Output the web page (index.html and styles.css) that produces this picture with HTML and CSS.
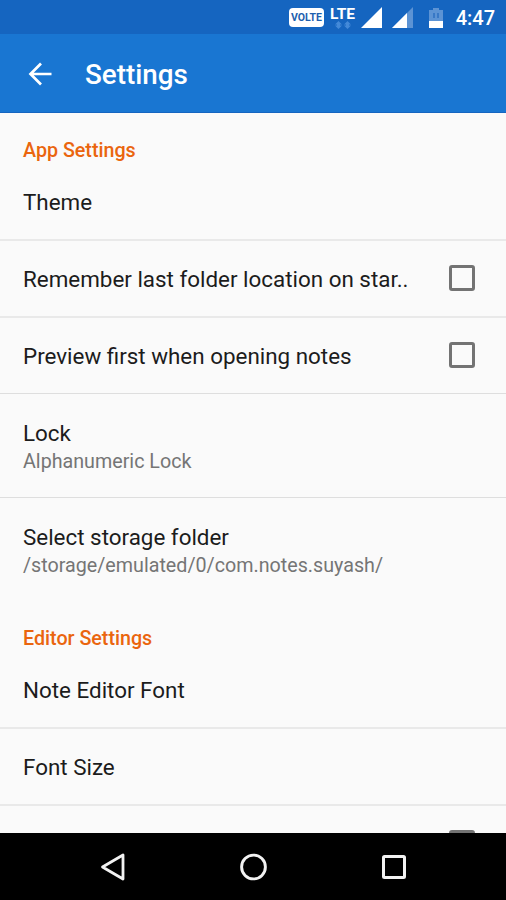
FILE: index.html
```html
<!DOCTYPE html>
<html lang="en">
<head>
  <meta charset="UTF-8">
  <meta name="viewport" content="width=device-width, initial-scale=1.0">
  <title>Settings</title>
  <link rel="stylesheet" href="styles.css">
</head>
<body>
  <div class="status-bar">
    <span class="volte">VOLTE</span>
    <div class="lte">
      <span>LTE</span>
      <svg width="18" height="8" viewBox="0 0 18 8"><path d="M4.5 0L8 3.5H6V4.5H8L4.5 8L1 4.5H3V3.5H1ZM13.500 0L17 3.500H15V4.500H17L13.500 8L10 4.500H12V3.500H10Z" fill="#4389d8"/></svg>
    </div>
    <svg class="signal" width="21" height="21" viewBox="0 0 21 21"><path d="M21 0V21H0Z" fill="#fff"/></svg>
    <svg class="signal-low" width="21" height="21" viewBox="0 0 21 21"><path d="M21 0V21H0Z" fill="#5c93d4"/><path d="M15 6V21H0Z" fill="#fff"/></svg>
    <svg class="battery" width="14" height="20" viewBox="0 0 14 20"><path d="M4 0H10V2H14V20H0V2H4Z" fill="#5c93d4"/><path d="M0 13H14V20H0Z" fill="#fff"/><path d="M4 5H6V10H4ZM8 5H10V10H8Z" fill="#3878c6"/></svg>
    <span class="clock">4:47</span>
  </div>

  <header class="toolbar">
    <svg class="back" width="24" height="24" viewBox="0 0 24 24"><path d="M23.500 12H2.500M13 1.500L2.500 12L13 22.500" fill="none" stroke="#fff" stroke-width="2.700"/></svg>
    <h1>Settings</h1>
  </header>

  <main class="settings">
    <h2>App Settings</h2>
    <div class="row"><span class="title">Theme</span></div>
    <div class="row">
      <span class="title">Remember last folder location on star..</span>
      <span class="checkbox"></span>
    </div>
    <div class="row thin short">
      <span class="title">Preview first when opening notes</span>
      <span class="checkbox"></span>
    </div>
    <div class="row double thin">
      <span class="title">Lock</span>
      <span class="summary">Alphanumeric Lock</span>
    </div>
    <div class="row double last">
      <span class="title">Select storage folder</span>
      <span class="summary">/storage/emulated/0/com.notes.suyash/</span>
    </div>
    <h2>Editor Settings</h2>
    <div class="row"><span class="title">Note Editor Font</span></div>
    <div class="row"><span class="title">Font Size</span></div>
    <div class="row"><span class="title"></span><span class="checkbox"></span></div>
  </main>

  <nav class="nav-bar">
    <svg width="28" height="30" viewBox="0 0 28 30"><path d="M24 3V27L3.500 15Z" fill="none" stroke="#f2f2f2" stroke-width="2.800" stroke-linejoin="round"/></svg>
    <svg width="28" height="30" viewBox="0 0 28 30"><circle cx="14.500" cy="15" r="11.900" fill="none" stroke="#f2f2f2" stroke-width="2.900"/></svg>
    <svg width="28" height="30" viewBox="0 0 28 30"><rect x="4.500" y="4.500" width="21" height="21" rx="1" fill="none" stroke="#f2f2f2" stroke-width="3"/></svg>
  </nav>
</body>
</html>
```

FILE: styles.css
```css
* {
  box-sizing: border-box;
}

body {
  margin: 0;
  height: 900px;
  display: flex;
  flex-direction: column;
  overflow: hidden;
  font-family: Roboto, "Liberation Sans", sans-serif;
  background: #fafafa;
}

svg {
  display: block;
  flex: none;
}

.status-bar {
  flex: none;
  height: 34px;
  display: flex;
  align-items: flex-start;
  padding: 7px 11px 0 289px;
  background: #1565c0;
  color: #fff;
}

.volte {
  width: 35px;
  height: 19px;
  margin-top: 1px;
  border-radius: 4px;
  background: #fff;
  color: #1e5fae;
  font-size: 10.5px;
  font-weight: bold;
  line-height: 19px;
  text-align: center;
}

.lte {
  width: 26px;
  margin-left: 6px;
  font-size: 15.5px;
  font-weight: bold;
  line-height: 14px;
}

.lte svg {
  margin: 0 0 0 4px;
}

.signal {
  margin-left: 5px;
}

.signal-low {
  margin-left: 10px;
}

.battery {
  margin: 1px 0 0 16px;
}

.clock {
  margin-left: auto;
  font-size: 20px;
  font-weight: 500;
  line-height: 23px;
}

.toolbar {
  flex: none;
  height: 79px;
  display: flex;
  align-items: center;
  padding-left: 28px;
  border-bottom: 1px solid #1565c0;
  background: #1976d2;
  color: #fff;
}

.back {
  margin-top: 1px;
}

.toolbar h1 {
  margin: 3px 0 0 33px;
  font-size: 27.8px;
  font-weight: 500;
}

.settings {
  flex: 1;
  min-height: 0;
  overflow: hidden;
}

.settings h2 {
  height: 51px;
  margin: 0;
  padding: 25px 23px 0;
  color: #ea650e;
  font-size: 19.7px;
  font-weight: 500;
  line-height: 26px;
}

.row {
  height: 77px;
  display: flex;
  align-items: center;
  justify-content: space-between;
  padding: 0 31px 0 23px;
  border-bottom: 2px solid #e9e9e9;
}

.thin {
  border-bottom: 1px solid #dedede;
}

.short {
  height: 76px;
}

.title {
  color: #1c1c1c;
  font-size: 22.4px;
  line-height: 30px;
}

.double {
  height: 104px;
  flex-direction: column;
  align-items: flex-start;
  justify-content: center;
  padding-top: 2px;
}

.summary {
  color: #757575;
  font-size: 19.7px;
  line-height: 28px;
}

.last {
  height: 103px;
  border-bottom: none;
}

.checkbox {
  width: 26px;
  height: 26px;
  margin-bottom: 2px;
  border: 3px solid #737373;
  border-radius: 3px;
}

.nav-bar {
  flex: none;
  height: 67px;
  display: flex;
  align-items: center;
  justify-content: center;
  gap: 112px;
  background: #000;
}
```
